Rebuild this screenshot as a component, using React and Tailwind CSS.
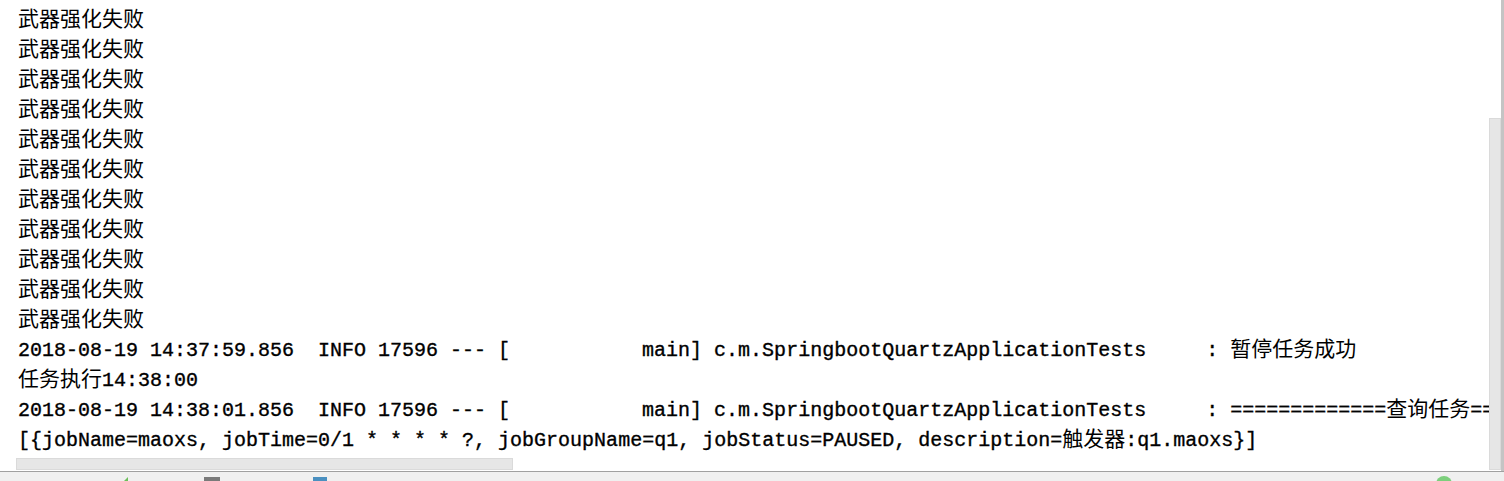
import React from 'react'

const Zh = ({ children }) => (
    <span className="text-[21px] [-webkit-text-stroke:0px]" style={{ fontFamily: '"Noto Sans CJK SC", sans-serif' }}>{children}</span>
)

const fails = Array.from({ length: 11 })

export default function App() {
    return (
        <div className="w-[1504px] h-[481px] bg-white flex flex-col overflow-hidden">
            <div className="flex flex-1 min-h-0">
                {/* console output */}
                <div className="flex-1 min-w-0 overflow-hidden flex flex-col">
                    <div
                        className="flex-1 pl-[18px] pt-[2px] text-[20px] leading-[30px] text-black whitespace-pre [-webkit-text-stroke:0.35px_black]"
                        style={{ fontFamily: '"Liberation Mono", "Noto Sans CJK SC", monospace' }}
                    >
                        {fails.map((_, i) => (
                            <div key={i} className="h-[30px]"><Zh>武器强化失败</Zh></div>
                        ))}
                        <div className="h-[30px]">
                            2018-08-19 14:37:59.856  INFO 17596 --- [           main] c.m.SpringbootQuartzApplicationTests     : <Zh>暂停任务成功</Zh>
                        </div>
                        <div className="h-[30px]"><Zh>任务执行</Zh>14:38:00</div>
                        <div className="h-[30px]">
                            2018-08-19 14:38:01.856  INFO 17596 --- [           main] c.m.SpringbootQuartzApplicationTests     : =============<Zh>查询任务</Zh>===
                        </div>
                        <div className="h-[30px]">
                            [{'{'}jobName=maoxs, jobTime=0/1 * * * * ?, jobGroupName=q1, jobStatus=PAUSED, description=<Zh>触发器</Zh>:q1.maoxs{'}'}]
                        </div>
                    </div>
                    {/* horizontal scrollbar */}
                    <div className="h-[15px] pl-[16px] pt-[2px]">
                        <div className="w-[497px] h-[12px] bg-[#e6e6e6] border border-[#dadada]" />
                    </div>
                </div>
                {/* vertical scrollbar */}
                <div className="w-[15px] flex">
                    <div className="w-[12px] flex flex-col pt-[118px] pb-[1px]">
                        <div className="flex-1 bg-[#e6e6e6] border border-[#dadada]" />
                    </div>
                    <div className="w-[3px] bg-[#c4c4c4]" />
                </div>
            </div>
            {/* bottom toolbar strip */}
            <div className="h-[10px] border-t border-[#a0a0a0] bg-[#f0f0f0] relative">
                <div className="absolute left-[123px] top-[5px] w-0 h-0 border-l-[5px] border-l-transparent border-b-[5px] border-b-[#6cbf5a]" />
                <div className="absolute left-[204px] top-[5px] w-[16px] h-[5px] bg-[#7a7a7a]" />
                <div className="absolute left-[313px] top-[5px] w-[14px] h-[5px] bg-[#4a90c0]" />
                <div className="absolute left-[1436px] top-[4px] w-[16px] h-[16px] rounded-full bg-[#7ccf7c]" />
            </div>
        </div>
    )
}
